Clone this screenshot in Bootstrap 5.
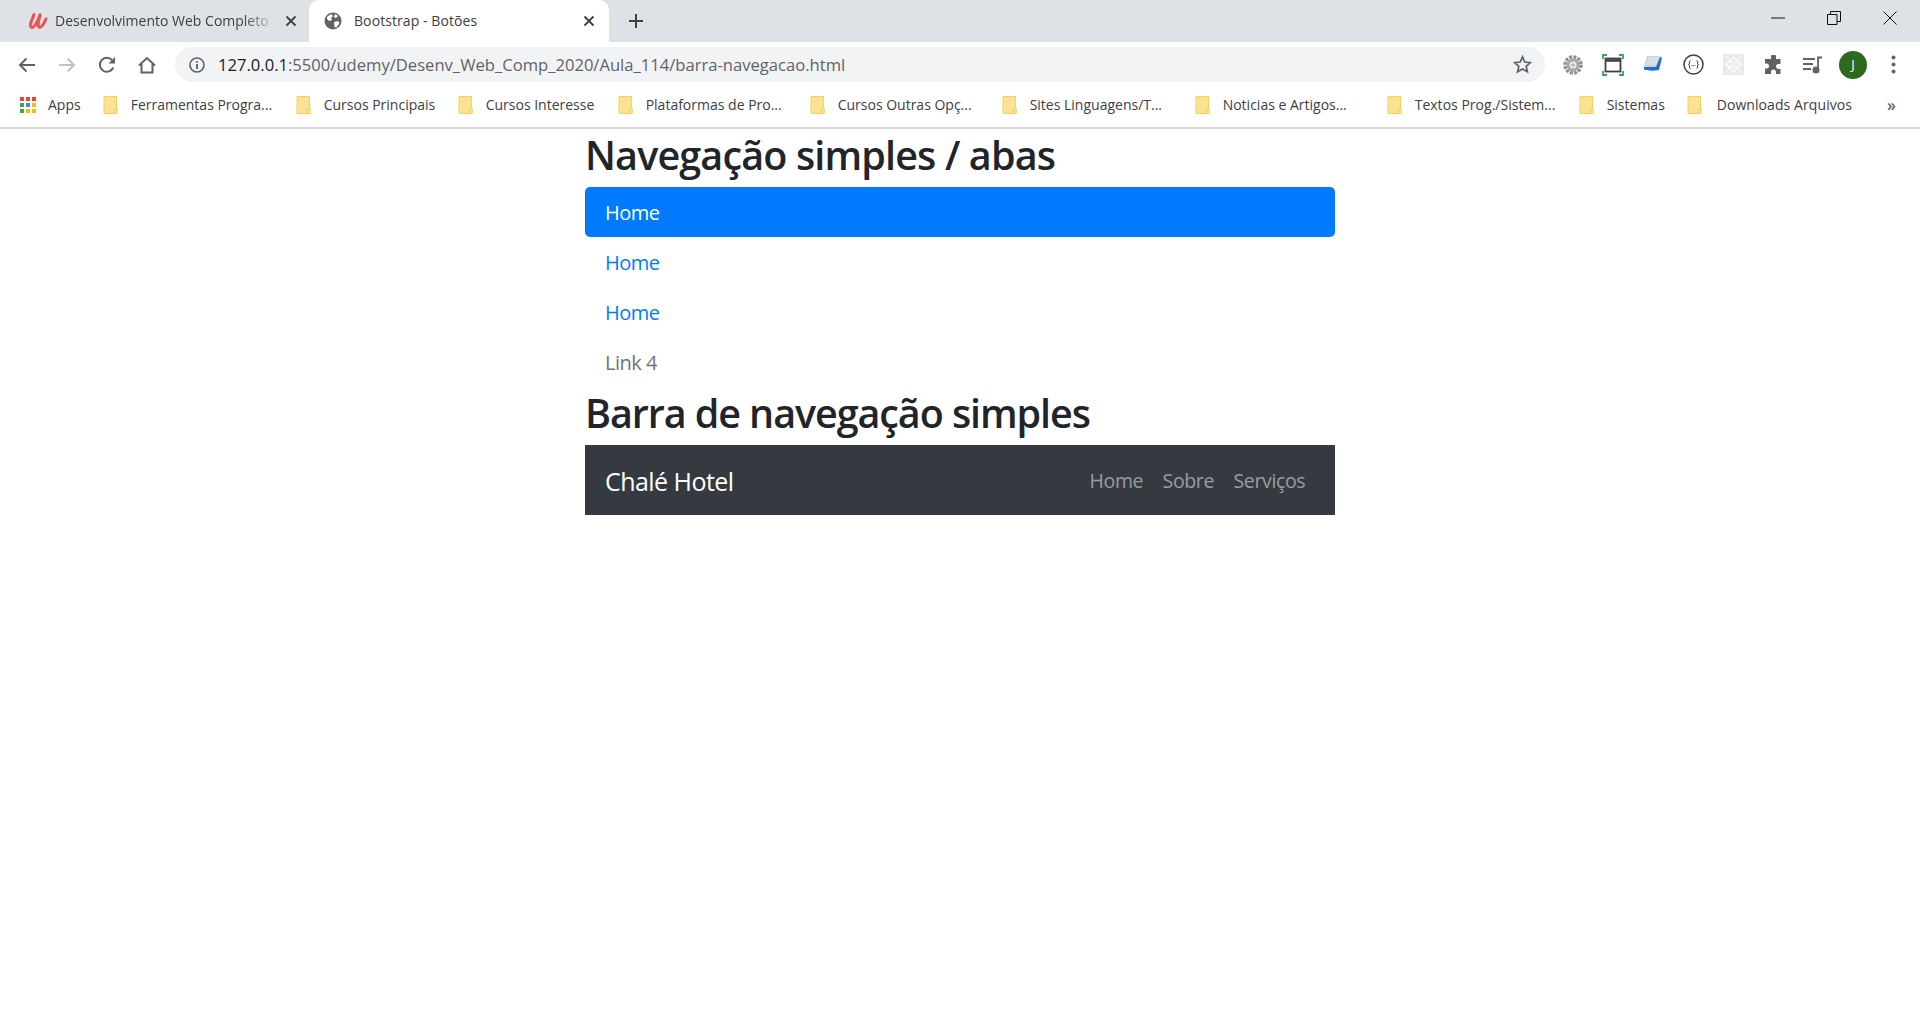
<!DOCTYPE html>
<html lang="pt-BR">
<head>
<meta charset="utf-8">
<title>Bootstrap - Botões</title>
<link href="https://cdn.jsdelivr.net/npm/bootstrap@5.3.0/dist/css/bootstrap.min.css" rel="stylesheet">
<style>
html,body{height:100%;}
body{overflow:hidden;background:#fff;font-family:"Open Sans","Noto Sans",sans-serif;color:#212529;}
.tabstrip{height:42px;background:#dee1e6;font-size:14px;color:#3c4043;}
.tabstrip svg{flex-shrink:0;}
.tabitem{height:42px;padding:0 14px 1px 16px;}
.tab-first{margin-left:12px;width:297px;padding-right:12px;}
.tab-first .tabname{margin-left:-1px;}
.tab-active{background:#fff;border-radius:10px 10px 0 0;width:300px;padding-left:15px;padding-right:14px;}
.tab-active .tabname{letter-spacing:.08px;}
.tabname{flex:1;overflow:hidden;white-space:nowrap;min-width:0;}
.tab-fade{-webkit-mask-image:linear-gradient(to right,#000 85%,transparent);mask-image:linear-gradient(to right,#000 85%,transparent);}
.plus-icon{margin-left:19px;}
.winctl{width:56px;height:36px;}
.winset{margin-right:2px;}
.toolrow{height:40px;background:#fff;padding-top:5px;}
.navicon{width:40px;height:35px;}
.toolicons{padding-left:7px;}
.omni{height:35px;width:1370px;margin-left:8px;background:#f1f3f4;border-radius:18px;padding:0 13px 0 14px;font-size:16.6px;color:#5f6368;}
.omni-url{margin-left:13px;padding-top:1px;}
.omni-dark{color:#202124;}
.exticon{width:40px;height:35px;}
.avatar-j{width:28px;height:28px;background:#2d6a1e;color:#fff;font-size:13px;}
.bookrow{height:45px;padding-left:20px;font-size:14px;color:#3c4043;}
.bookrule{height:2px;background:#dadce0;}
.bmk{white-space:nowrap;gap:13px;}
.bmk svg{flex-shrink:0;}
.bm-apps{gap:12px;margin-right:22px;}
.bmk-1{width:169px;margin-right:24px;}
.bmk-2{width:139px;margin-right:23px;}
.bmk-3{width:136px;margin-right:24px;}
.bmk-4{width:157px;margin-right:35px;}
.bmk-5{width:164px;margin-right:28px;}
.bmk-6{width:164px;margin-right:29px;}
.bmk-7{width:164px;margin-right:28px;}
.bmk-10{width:164px;margin-right:28px;letter-spacing:.02px;}
.bmk-8{width:86px;margin-right:22px;}
.bmk-9{width:164px;gap:15px;letter-spacing:.08px;}
.more{margin-left:auto;margin-right:24px;font-size:16px;color:#5f6368;font-weight:600;}
.pagewrap{width:750px;margin:0 auto;}
.pagetitle{font-size:39.5px;font-weight:600;line-height:50px;margin:0 0 8px;padding-top:1px;height:50px;font-family:"Open Sans","Noto Sans",sans-serif;}
.title-a{letter-spacing:-.85px;}
.title-b{letter-spacing:-1.08px;}
.pillset .nav-link{font-size:20px;line-height:30px;padding:11px 20px 9px;color:#007bff;border-radius:5px;letter-spacing:-.5px;}
.pillset .nav-link.active{background:#007bff;color:#fff;}
.pillset .nav-link.disabled{color:#6c757d;}
.hotelbar{--bs-navbar-nav-link-padding-x:9.7px;background:#343a40;height:70px;padding:10px 20px;}
.hotelbar .navbar-brand{font-size:25px;line-height:38px;color:#fff;padding:7px 0 5px;margin:0;letter-spacing:-.55px;}
.hotelbar .nav-link{font-size:19.5px;line-height:30px;padding-top:11px;padding-bottom:9px;color:rgba(255,255,255,.5);letter-spacing:-.35px;}
</style>
</head>
<body>
<header>
  <div class="tabstrip d-flex align-items-center">
    <div class="tabitem tab-first d-flex align-items-center gap-2">
      <svg width="20" height="18" viewBox="0 0 20 18" fill="none" stroke="#ec5252" stroke-width="3" stroke-linecap="round"><path d="M6 2.500C5 6 2 11 2.500 14C3 16.500 6 15.500 8 12"/><path d="M8 12C9.500 9 11 6 12 3"/><path d="M12 3C11 7 9 13 11 15C13 16.500 16 12 18 7"/></svg>
      <div class="tabname tab-fade">Desenvolvimento Web Completo</div>
      <svg width="12" height="12" viewBox="0 0 12 12" stroke="#3c4043" stroke-width="1.800"><path d="M1.500 1.500l9 9M10.500 1.500l-9 9"/></svg>
    </div>
    <div class="tabitem tab-active d-flex align-items-center gap-2">
      <svg width="18" height="18" viewBox="0 0 18 18"><circle cx="9" cy="9" r="8.500" fill="#5f6368"/><path d="M3 5l4-3 2 2-2 2 1 2-3 1-2-2zM10 10l4-1 1.500 2-3 4.500-2-.500zM11 2l3 2-2 2-2-1z" fill="#fff"/></svg>
      <div class="tabname ms-1">Bootstrap - Botões</div>
      <svg width="12" height="12" viewBox="0 0 12 12" stroke="#3c4043" stroke-width="1.800"><path d="M1.500 1.500l9 9M10.500 1.500l-9 9"/></svg>
    </div>
    <svg class="plus-icon" width="16" height="16" viewBox="0 0 16 16" stroke="#3c4043" stroke-width="2"><path d="M8 1v14M1 8h14"/></svg>
    <div class="winset d-flex ms-auto align-self-start">
      <div class="winctl d-flex align-items-center justify-content-center"><svg width="14" height="2" viewBox="0 0 14 2" stroke="#111"><path d="M0 1h14"/></svg></div>
      <div class="winctl d-flex align-items-center justify-content-center"><svg width="14" height="14" viewBox="0 0 14 14" fill="none" stroke="#111"><path d="M.5 3.500h9.500v10H.5zM3.500 3.500V.5h10v10H10"/></svg></div>
      <div class="winctl d-flex align-items-center justify-content-center"><svg width="14" height="14" viewBox="0 0 14 14" stroke="#111"><path d="M.5.5l13 13M13.500.5l-13 13"/></svg></div>
    </div>
  </div>
  <div class="toolrow d-flex">
    <div class="toolicons d-flex">
      <div class="navicon d-flex align-items-center justify-content-center"><svg width="18" height="16" viewBox="0 0 18 16" fill="none" stroke="#5f6368" stroke-width="2"><path d="M17 8H2M8.500 1.500L2 8l6.500 6.500"/></svg></div>
      <div class="navicon d-flex align-items-center justify-content-center"><svg width="18" height="16" viewBox="0 0 18 16" fill="none" stroke="#bdc1c6" stroke-width="2"><path d="M1 8h15M9.500 1.500L16 8l-6.500 6.500"/></svg></div>
      <div class="navicon d-flex align-items-center justify-content-center"><svg width="18" height="18" viewBox="0 0 18 18" fill="none" stroke="#5f6368" stroke-width="2"><path d="M15.300 11.500A7 7 0 1 1 14 4"/><path d="M17 1v6.500h-6.500z" fill="#5f6368" stroke="none"/></svg></div>
      <div class="navicon d-flex align-items-center justify-content-center"><svg width="18" height="18" viewBox="0 0 18 18" fill="none" stroke="#5f6368" stroke-width="2"><path d="M1 9.500L9 2l8 7.500M3.500 8v8.500h11V8"/></svg></div>
    </div>
    <div class="omni d-flex align-items-center">
      <svg width="16" height="16" viewBox="0 0 16 16" fill="none"><circle cx="8" cy="8" r="7" stroke="#5f6368" stroke-width="1.600"/><path d="M8 7v5M8 4v1.800" stroke="#5f6368" stroke-width="1.800"/></svg>
      <div class="omni-url flex-grow-1"><span class="omni-dark">127.0.0.1</span>:5500/udemy/Desenv_Web_Comp_2020/Aula_114/barra-navegacao.html</div>
      <svg width="19" height="19" viewBox="0 0 19 19" fill="none" stroke="#5f6368" stroke-width="1.700"><path d="M9.500 1.800l2.300 5.200 5.600.6-4.200 3.700 1.200 5.500-4.900-2.900-4.900 2.900 1.200-5.500L1.600 7.600l5.600-.6z"/></svg>
    </div>
    <div class="d-flex ms-2">
      <div class="exticon d-flex align-items-center justify-content-center"><svg width="20" height="20" viewBox="0 0 20 20"><circle cx="10" cy="10" r="8" fill="none" stroke="#8f8f8f" stroke-width="3.500" stroke-dasharray="3 1.200"/><circle cx="10" cy="10" r="6.500" fill="#a8a8a8"/><circle cx="10" cy="10" r="3.500" fill="#ececec"/><circle cx="10" cy="10" r="1.800" fill="#b5b5b5"/></svg></div>
      <div class="exticon d-flex align-items-center justify-content-center"><svg width="22" height="22" viewBox="0 0 22 22" fill="none"><path d="M1 5V1h4M17 1h4v4M21 17v4h-4M5 21H1v-4" stroke="#34a853" stroke-width="1.800"/><rect x="3.500" y="4.500" width="15" height="13" stroke="#3c4043" stroke-width="1.800"/><path d="M3.500 6.500h15" stroke="#3c4043" stroke-width="2.500"/></svg></div>
      <div class="exticon d-flex align-items-center justify-content-center"><svg width="20" height="20" viewBox="0 0 20 20"><path d="M4 1h13l-3 11H1z" fill="#cfd3d8"/><path d="M5 3h10M4.500 5h10M4 7h10M3.500 9h10" stroke="#eef0f2" stroke-width=".8"/><path d="M17 2l2 .5L16 15c-5 1-11 1-15-.5L1 12h12z" fill="#1a73c9"/></svg></div>
      <div class="exticon d-flex align-items-center justify-content-center"><svg width="21" height="21" viewBox="0 0 21 21" fill="none"><circle cx="10.500" cy="10.500" r="9.500" stroke="#3c4043" stroke-width="1.500"/><path d="M7.500 6.500c-1.500 0-1 2.500-1.200 3.500-.1.500-.8.500-.8.500s.7 0 .8.500c.2 1-.3 3.500 1.200 3.500M13.500 6.500c1.500 0 1 2.500 1.200 3.500.1.500.8.500.8.500s-.7 0-.8.500c-.2 1 .3 3.500-1.200 3.500" stroke="#3c4043"/><path d="M8.500 11.500h4" stroke="#3c4043" stroke-dasharray="1 .8"/></svg></div>
      <div class="exticon d-flex align-items-center justify-content-center"><svg width="21" height="21" viewBox="0 0 21 21"><rect width="21" height="21" fill="#e9e9e9"/><path d="M10.500 3l7.500 7.500-7.500 7.500L3 10.500z" fill="none" stroke="#fff" stroke-width="1.500"/><circle cx="10.500" cy="10.500" r="3" fill="none" stroke="#fff"/><path d="M2 2l17 17M19 2L2 19" stroke="#fff" stroke-width=".8"/></svg></div>
      <div class="exticon d-flex align-items-center justify-content-center"><svg width="20" height="20" viewBox="0 0 20 20"><path d="M8 1.500a2.500 2.500 0 0 1 5 0V4h4.500v5h-2a2.500 2.500 0 0 0 0 5h2v5H13v-2a2.500 2.500 0 0 0-5 0v2H2v-5.500h1.500a2.500 2.500 0 0 0 0-5H2V4h6z" fill="#5f6368"/></svg></div>
      <div class="exticon d-flex align-items-center justify-content-center"><svg width="20" height="18" viewBox="0 0 20 18" fill="none" stroke="#5f6368" stroke-width="1.800"><path d="M0 3h12M0 8h10M0 13h8M15 14V1.500h4"/><circle cx="13" cy="14" r="2.600" fill="#5f6368"/></svg></div>
      <div class="exticon d-flex align-items-center justify-content-center"><div class="avatar-j rounded-circle d-flex align-items-center justify-content-center">J</div></div>
      <div class="exticon d-flex align-items-center justify-content-center"><svg width="5" height="19" viewBox="0 0 5 19" fill="#5f6368"><circle cx="2.500" cy="2.500" r="2"/><circle cx="2.500" cy="9.500" r="2"/><circle cx="2.500" cy="16.500" r="2"/></svg></div>
    </div>
  </div>
  <div class="bookrow d-flex align-items-center">
    <div class="bmk bm-apps d-flex align-items-center">
      <svg width="16" height="16" viewBox="0 0 16 16"><rect width="4" height="4" fill="#ea4335"/><rect x="6" width="4" height="4" fill="#ea4335"/><rect x="12" width="4" height="4" fill="#ea4335"/><rect y="6" width="4" height="4" fill="#34a853"/><rect x="6" y="6" width="4" height="4" fill="#4285f4"/><rect x="12" y="6" width="4" height="4" fill="#fbbc04"/><rect y="12" width="4" height="4" fill="#34a853"/><rect x="6" y="12" width="4" height="4" fill="#fbbc04"/><rect x="12" y="12" width="4" height="4" fill="#fbbc04"/></svg>
      <span>Apps</span>
    </div>
    <div class="bmk bmk-1 d-flex align-items-center"><svg width="15" height="18" viewBox="0 0 15 18"><path d="M1 .5h12.500v17H1z" fill="#fde293" stroke="#f6d05c"/><path d="M11 13h4v5h-4z" fill="#fde293" stroke="#f6d05c"/></svg><span>Ferramentas Progra...</span></div>
    <div class="bmk bmk-2 d-flex align-items-center"><svg width="15" height="18" viewBox="0 0 15 18"><path d="M1 .5h12.500v17H1z" fill="#fde293" stroke="#f6d05c"/><path d="M11 13h4v5h-4z" fill="#fde293" stroke="#f6d05c"/></svg><span>Cursos Principais</span></div>
    <div class="bmk bmk-3 d-flex align-items-center"><svg width="15" height="18" viewBox="0 0 15 18"><path d="M1 .5h12.500v17H1z" fill="#fde293" stroke="#f6d05c"/><path d="M11 13h4v5h-4z" fill="#fde293" stroke="#f6d05c"/></svg><span>Cursos Interesse</span></div>
    <div class="bmk bmk-4 d-flex align-items-center"><svg width="15" height="18" viewBox="0 0 15 18"><path d="M1 .5h12.500v17H1z" fill="#fde293" stroke="#f6d05c"/><path d="M11 13h4v5h-4z" fill="#fde293" stroke="#f6d05c"/></svg><span>Plataformas de Pro...</span></div>
    <div class="bmk bmk-5 d-flex align-items-center"><svg width="15" height="18" viewBox="0 0 15 18"><path d="M1 .5h12.500v17H1z" fill="#fde293" stroke="#f6d05c"/><path d="M11 13h4v5h-4z" fill="#fde293" stroke="#f6d05c"/></svg><span>Cursos Outras Opç...</span></div>
    <div class="bmk bmk-6 d-flex align-items-center"><svg width="15" height="18" viewBox="0 0 15 18"><path d="M1 .5h12.500v17H1z" fill="#fde293" stroke="#f6d05c"/><path d="M11 13h4v5h-4z" fill="#fde293" stroke="#f6d05c"/></svg><span>Sites Linguagens/T...</span></div>
    <div class="bmk bmk-7 d-flex align-items-center"><svg width="15" height="18" viewBox="0 0 15 18"><path d="M1 .5h12.500v17H1z" fill="#fde293" stroke="#f6d05c"/><path d="M11 13h4v5h-4z" fill="#fde293" stroke="#f6d05c"/></svg><span>Noticias e Artigos...</span></div>
    <div class="bmk bmk-10 d-flex align-items-center"><svg width="15" height="18" viewBox="0 0 15 18"><path d="M1 .5h12.500v17H1z" fill="#fde293" stroke="#f6d05c"/><path d="M11 13h4v5h-4z" fill="#fde293" stroke="#f6d05c"/></svg><span>Textos Prog./Sistem...</span></div>
    <div class="bmk bmk-8 d-flex align-items-center"><svg width="15" height="18" viewBox="0 0 15 18"><path d="M1 .5h12.500v17H1z" fill="#fde293" stroke="#f6d05c"/><path d="M11 13h4v5h-4z" fill="#fde293" stroke="#f6d05c"/></svg><span>Sistemas</span></div>
    <div class="bmk bmk-9 d-flex align-items-center"><svg width="15" height="18" viewBox="0 0 15 18"><path d="M1 .5h12.500v17H1z" fill="#fde293" stroke="#f6d05c"/><path d="M11 13h4v5h-4z" fill="#fde293" stroke="#f6d05c"/></svg><span>Downloads Arquivos</span></div>
    <span class="more">»</span>
  </div>
  <div class="bookrule"></div>
</header>
<main class="pagewrap">
  <h1 class="pagetitle title-a">Navegação simples / abas</h1>
  <ul class="nav nav-pills flex-column pillset">
    <li class="nav-item"><a class="nav-link active" href="#">Home</a></li>
    <li class="nav-item"><a class="nav-link" href="#">Home</a></li>
    <li class="nav-item"><a class="nav-link" href="#">Home</a></li>
    <li class="nav-item"><a class="nav-link disabled" href="#">Link 4</a></li>
  </ul>
  <h2 class="pagetitle title-b">Barra de navegação simples</h2>
  <nav class="navbar navbar-expand navbar-dark hotelbar">
    <a class="navbar-brand" href="#">Chalé Hotel</a>
    <ul class="navbar-nav ms-auto">
      <li class="nav-item"><a class="nav-link" href="#">Home</a></li>
      <li class="nav-item"><a class="nav-link" href="#">Sobre</a></li>
      <li class="nav-item"><a class="nav-link" href="#">Serviços</a></li>
    </ul>
  </nav>
</main>
</body>
</html>
